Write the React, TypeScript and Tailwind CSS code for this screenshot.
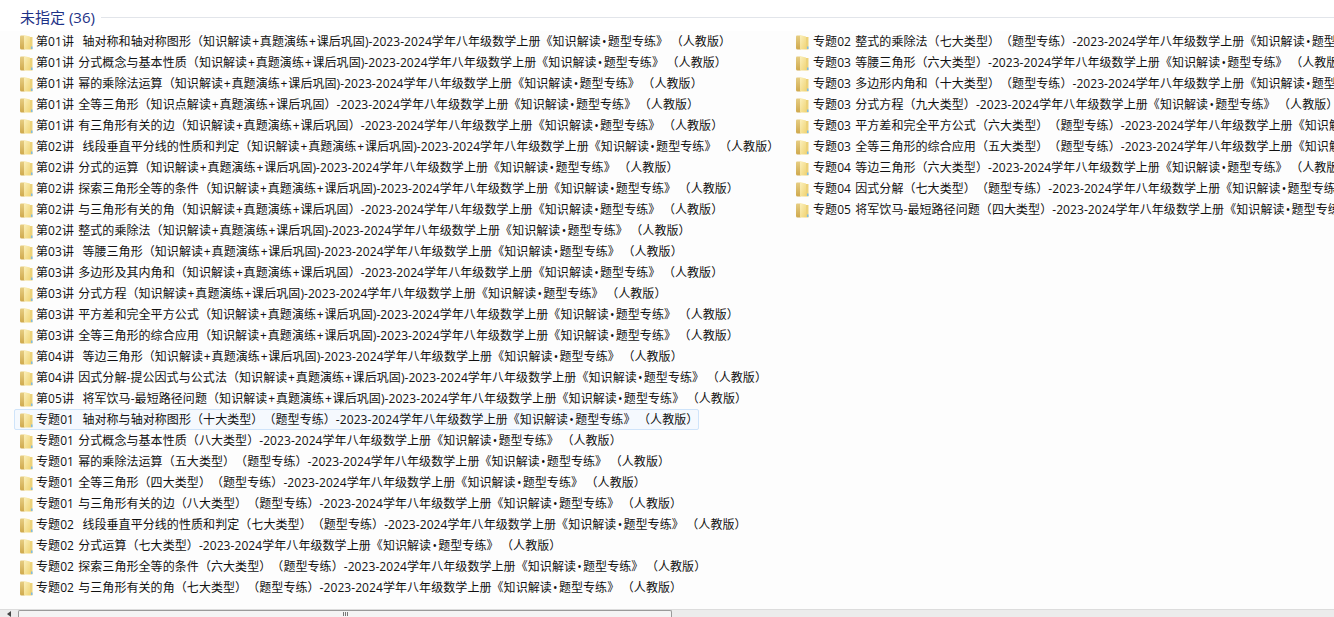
import React from 'react';

const left = [
  '第01讲  轴对称和轴对称图形（知识解读+真题演练+课后巩固)-2023-2024学年八年级数学上册《知识解读•题型专练》（人教版）',
  '第01讲 分式概念与基本性质（知识解读+真题演练+课后巩固)-2023-2024学年八年级数学上册《知识解读•题型专练》（人教版）',
  '第01讲 幂的乘除法运算（知识解读+真题演练+课后巩固)-2023-2024学年八年级数学上册《知识解读•题型专练》（人教版）',
  '第01讲 全等三角形（知识点解读+真题演练+课后巩固）-2023-2024学年八年级数学上册《知识解读•题型专练》（人教版）',
  '第01讲 有三角形有关的边（知识解读+真题演练+课后巩固）-2023-2024学年八年级数学上册《知识解读•题型专练》（人教版）',
  '第02讲  线段垂直平分线的性质和判定（知识解读+真题演练+课后巩固)-2023-2024学年八年级数学上册《知识解读•题型专练》（人教版）',
  '第02讲 分式的运算（知识解读+真题演练+课后巩固)-2023-2024学年八年级数学上册《知识解读•题型专练》（人教版）',
  '第02讲 探索三角形全等的条件（知识解读+真题演练+课后巩固)-2023-2024学年八年级数学上册《知识解读•题型专练》（人教版）',
  '第02讲 与三角形有关的角（知识解读+真题演练+课后巩固）-2023-2024学年八年级数学上册《知识解读•题型专练》（人教版）',
  '第02讲 整式的乘除法（知识解读+真题演练+课后巩固)-2023-2024学年八年级数学上册《知识解读•题型专练》（人教版）',
  '第03讲  等腰三角形（知识解读+真题演练+课后巩固)-2023-2024学年八年级数学上册《知识解读•题型专练》（人教版）',
  '第03讲 多边形及其内角和（知识解读+真题演练+课后巩固）-2023-2024学年八年级数学上册《知识解读•题型专练》（人教版）',
  '第03讲 分式方程（知识解读+真题演练+课后巩固)-2023-2024学年八年级数学上册《知识解读•题型专练》（人教版）',
  '第03讲 平方差和完全平方公式（知识解读+真题演练+课后巩固)-2023-2024学年八年级数学上册《知识解读•题型专练》（人教版）',
  '第03讲 全等三角形的综合应用（知识解读+真题演练+课后巩固)-2023-2024学年八年级数学上册《知识解读•题型专练》（人教版）',
  '第04讲  等边三角形（知识解读+真题演练+课后巩固)-2023-2024学年八年级数学上册《知识解读•题型专练》（人教版）',
  '第04讲 因式分解-提公因式与公式法（知识解读+真题演练+课后巩固)-2023-2024学年八年级数学上册《知识解读•题型专练》（人教版）',
  '第05讲  将军饮马-最短路径问题（知识解读+真题演练+课后巩固)-2023-2024学年八年级数学上册《知识解读•题型专练》（人教版）',
  '专题01  轴对称与轴对称图形（十大类型）（题型专练）-2023-2024学年八年级数学上册《知识解读•题型专练》（人教版）',
  '专题01 分式概念与基本性质（八大类型）-2023-2024学年八年级数学上册《知识解读•题型专练》（人教版）',
  '专题01 幂的乘除法运算（五大类型）（题型专练）-2023-2024学年八年级数学上册《知识解读•题型专练》（人教版）',
  '专题01 全等三角形（四大类型）（题型专练）-2023-2024学年八年级数学上册《知识解读•题型专练》（人教版）',
  '专题01 与三角形有关的边（八大类型）（题型专练）-2023-2024学年八年级数学上册《知识解读•题型专练》（人教版）',
  '专题02  线段垂直平分线的性质和判定（七大类型）（题型专练）-2023-2024学年八年级数学上册《知识解读•题型专练》（人教版）',
  '专题02 分式运算（七大类型）-2023-2024学年八年级数学上册《知识解读•题型专练》（人教版）',
  '专题02 探索三角形全等的条件（六大类型）（题型专练）-2023-2024学年八年级数学上册《知识解读•题型专练》（人教版）',
  '专题02 与三角形有关的角（七大类型）（题型专练）-2023-2024学年八年级数学上册《知识解读•题型专练》（人教版）',
];

const right = [
  '专题02 整式的乘除法（七大类型）（题型专练）-2023-2024学年八年级数学上册《知识解读•题型专练》（人教版）',
  '专题03 等腰三角形（六大类型）-2023-2024学年八年级数学上册《知识解读•题型专练》（人教版）',
  '专题03 多边形内角和（十大类型）（题型专练）-2023-2024学年八年级数学上册《知识解读•题型专练》（人教版）',
  '专题03 分式方程（九大类型）-2023-2024学年八年级数学上册《知识解读•题型专练》（人教版）',
  '专题03 平方差和完全平方公式（六大类型）（题型专练）-2023-2024学年八年级数学上册《知识解读•题型专练》（人教版）',
  '专题03 全等三角形的综合应用（五大类型）（题型专练）-2023-2024学年八年级数学上册《知识解读•题型专练》（人教版）',
  '专题04 等边三角形（六大类型）-2023-2024学年八年级数学上册《知识解读•题型专练》（人教版）',
  '专题04 因式分解（七大类型）（题型专练）-2023-2024学年八年级数学上册《知识解读•题型专练》（人教版）',
  '专题05 将军饮马-最短路径问题（四大类型）-2023-2024学年八年级数学上册《知识解读•题型专练》（人教版）',
];

const Folder = () => (
  <svg width="16" height="16" viewBox="0 0 16 16" className="shrink-0">
    <defs>
      <linearGradient id="folderBack" x1="0" y1="0" x2="0" y2="1">
        <stop offset="0" stopColor="#e6cd82" />
        <stop offset="1" stopColor="#cfa94d" />
      </linearGradient>
      <linearGradient id="folderFront" x1="0" y1="0" x2="1" y2="1">
        <stop offset="0" stopColor="#fbf0bd" />
        <stop offset="1" stopColor="#f0d475" />
      </linearGradient>
    </defs>
    <path d="M1 2.500q0-1 1-1h3.500v14H2.500q-1.500 0-1.500-1.500z" fill="url(#folderBack)" />
    <path d="M5 1l6 1.500V15.500H5z" fill="url(#folderFront)" />
    <path d="M11 3h2.500v12.500H11z" fill="#ecd27a" />
    <path d="M12 12.500h1.500v2.500H12z" fill="#7dbbe6" />
  </svg>
);

// the plus, bullet and closing quote sit wider in the original than in this font
const Label = ({ text }: { text: string }) => (
  <>
    {text.split(/([+•》])/).map((p, i) => {
      if (p === '+') return <span key={i} className="inline-block w-[8.5px] text-center">+</span>;
      if (p === '•') return <span key={i} className="inline-block w-[7px] text-center">•</span>;
      if (p === '》') return <span key={i} className="mr-[2.5px]">》</span>;
      return p;
    })}
  </>
);

const Row = ({ text, selected, gap }: { text: string; selected?: boolean; gap?: boolean }) => (
  <div
    className={`flex items-center h-[21px] pl-[4px] whitespace-pre border ${
      selected ? 'w-[685px] border-[#cfe4fa] bg-[#f5f9fe] rounded-[2px]' : 'border-transparent'
    }`}
  >
    <Folder />
    <span className={`${gap ? 'ml-[2px]' : 'ml-[1px]'} tracking-[0.07px] [text-spacing-trim:space-all] [word-spacing:1px]`}>
      <Label text={text} />
    </span>
  </div>
);

export default function App() {
  return (
    <div className="h-[617px] w-[1334px] overflow-hidden flex flex-col bg-white text-[12px] text-[#111] font-['Open_Sans','Noto_Sans_CJK_SC',sans-serif]">
      <div className="flex items-center h-[31px] pl-[20px] pt-[3px] shrink-0">
        <span className="text-[15px] text-[#1e3287]">未指定 (36)</span>
        <div className="flex-1 h-px bg-[#e2e5ea] ml-[6px]" />
      </div>
      <div className="flex-1 flex min-h-0 overflow-hidden bg-[#fdfdfd]">
        <div className="w-[790px] shrink-0 pl-[14px]">
          {left.map((t, i) => (
            <Row key={t} text={t} selected={i === 18} />
          ))}
        </div>
        <div className="flex-1 min-w-0 overflow-hidden">
          {right.map((t) => (
            <Row key={t} text={t} gap />
          ))}
        </div>
      </div>
      <div className="h-[8px] shrink-0 flex items-stretch bg-[#ececec] border-t border-[#dcdcdc]">
        <div className="w-[18px] flex items-center justify-center">
          <div className="w-0 h-0 border-y-[3px] border-y-transparent border-r-[4px] border-r-[#444]" />
        </div>
        <div className="w-[654px] bg-[#f4f4f4] border border-b-0 border-[#9a9a9a] rounded-t-[2px] flex justify-center pt-[1px] gap-px">
          <div className="w-px h-[4px] bg-[#777]" />
          <div className="w-px h-[4px] bg-[#777]" />
          <div className="w-px h-[4px] bg-[#777]" />
        </div>
      </div>
    </div>
  );
}
